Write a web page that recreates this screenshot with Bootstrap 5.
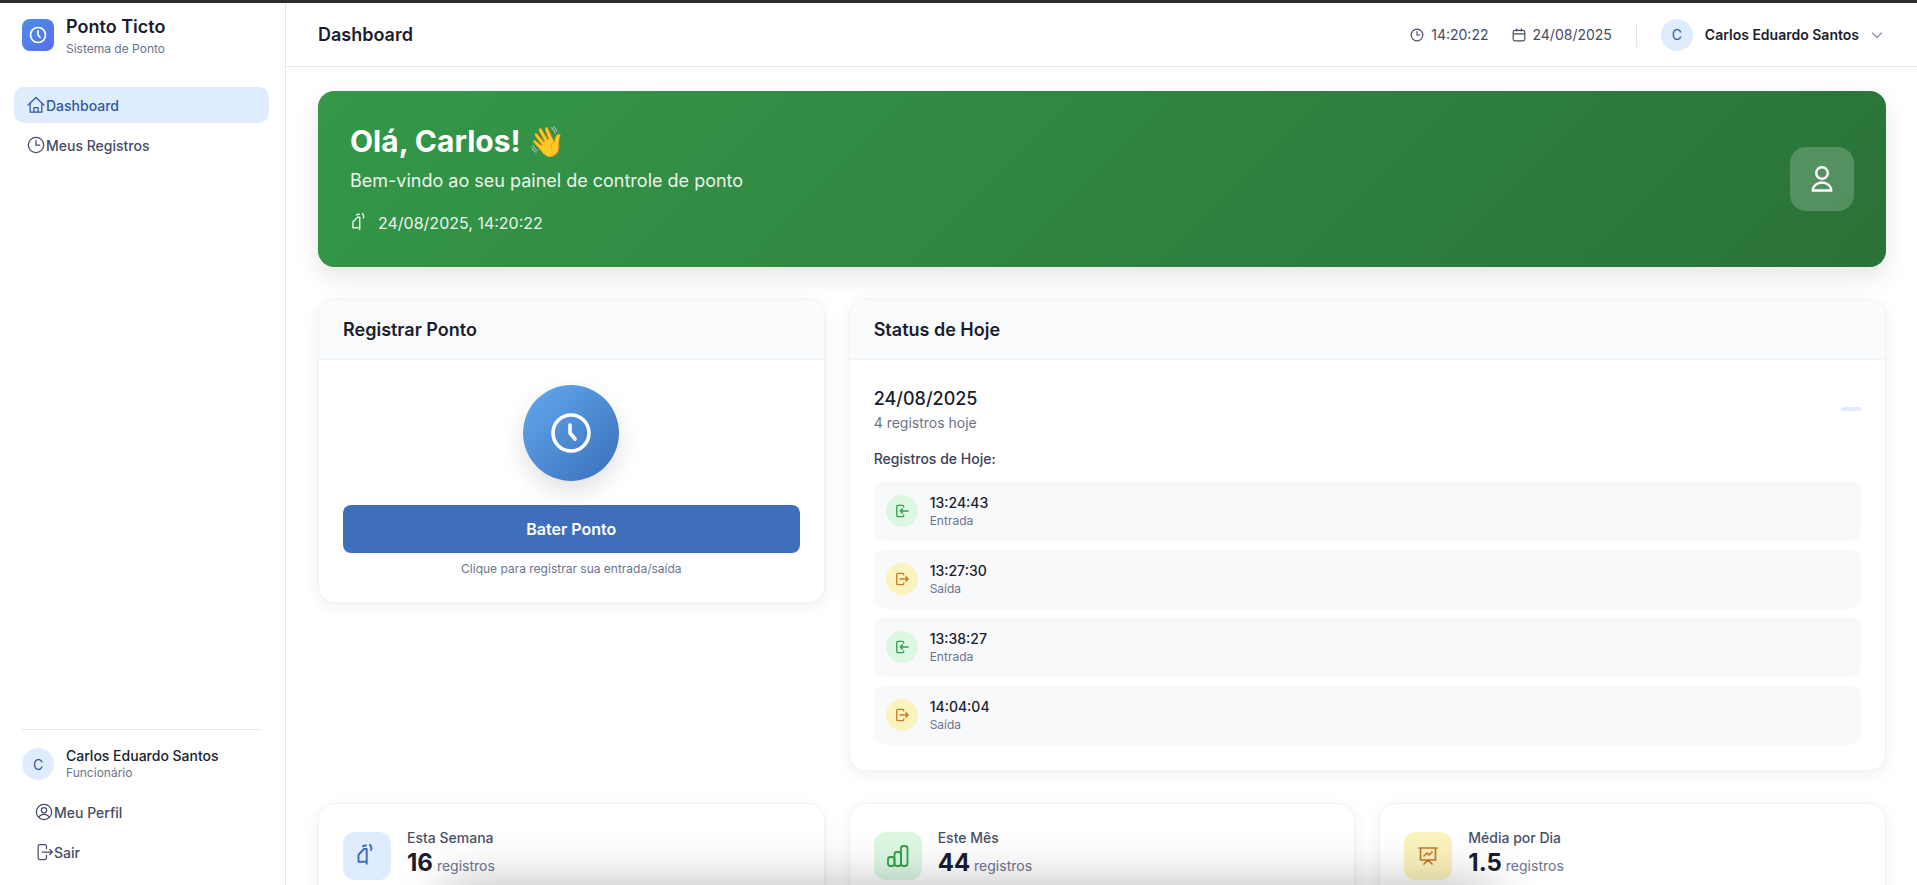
<!DOCTYPE html>
<html lang="pt-BR">
<head>
<meta charset="utf-8">
<title>Ponto Ticto</title>
<link href="https://cdn.jsdelivr.net/npm/bootstrap@5.3.0/dist/css/bootstrap.min.css" rel="stylesheet">
<style>
html,body{height:100%;}
body{font-family:"Inter","Noto Sans",sans-serif;color:#1a1d2e;background:#fff;overflow:hidden;}
.shell{height:100vh;border-top:3px solid #2f2f2f;position:relative;overflow:hidden;}
.side{width:286px;flex:none;border-right:1px solid #e2e6f0;background:#fff;padding:16px 22px 15px 14px;}
.brand{padding-left:8px;height:32px;margin-bottom:36px;gap:12px;}
.logo{width:32px;height:32px;border-radius:8px;background:linear-gradient(135deg,#4a90e2,#5a6cf0);color:#fff;}
.brand-name{font-size:18px;font-weight:600;line-height:22px;color:#1a1d2e;padding-top:2px;}
.brand-sub{font-size:12px;line-height:16px;color:#6b7390;margin-top:3px;}
.side-link{display:flex;align-items:center;height:36px;padding:0 12px;border-radius:10px;font-size:14px;font-weight:500;color:#464c63;text-decoration:none;width:255px;}
.side-link svg{flex:none;}
.side-link.on{background:#dfecfd;color:#2f5a9c;}
.side-foot{padding-left:8px;}
.foot-rule{border-top:1px solid #e2e6f0;margin-bottom:17px;width:239px;}
.foot-user{gap:12px;margin-bottom:13px;}
.avatar{width:32px;height:32px;border-radius:50%;background:#dfecfd;color:#2f5a9c;font-size:14px;flex:none;}
.user-name{font-size:14px;font-weight:500;line-height:18px;color:#1a1d2e;}
.user-role{font-size:12px;line-height:16px;color:#6b7390;}
.main{min-width:0;}
.topbar{height:64px;border-bottom:1px solid #e2e8f3;padding:0 34px 0 32px;background:#fff;flex:none;}
.page-title{font-size:18px;font-weight:600;margin:0;color:#1a1d2e;}
.top-meta{font-size:14px;color:#464c63;gap:7px;}
.top-meta+.top-meta{margin-left:24px;gap:6px;}
.v-rule{width:1px;height:24px;background:#e2e6f0;margin:0 24px;}
.top-person{gap:12px;}
.top-user{font-size:14px;font-weight:600;color:#1a1d2e;}
.content{padding:24px 31px 0 32px;}
.hero{height:176px;border-radius:16px;background:linear-gradient(135deg,#349848,#2a7238);color:#fff;padding:0 32px;box-shadow:0 10px 25px rgba(0,0,0,.1);margin-bottom:32px;}
.hero-title{font-size:30px;font-weight:700;line-height:36px;margin:0 0 8px;}
.hero-sub{font-size:18px;line-height:28px;opacity:.9;margin:0 0 16px;}
.hero-date{font-size:16px;line-height:24px;opacity:.9;gap:8px;}
.hero-box{width:64px;height:64px;border-radius:16px;background:rgba(255,255,255,.2);}
.panel{border:1px solid #f0f2f8;border-radius:16px;background:#fff;box-shadow:0 4px 16px rgba(0,0,0,.06);overflow:hidden;}
.panel-head{height:60px;padding:0 24px;background:#fafbfd;border-bottom:1px solid #f0f3f8;font-size:18px;font-weight:600;color:#1a1d2e;}
.panel-pad{padding:25px 24px;}
.punch{width:96px;height:96px;border-radius:50%;background:linear-gradient(135deg,#63a9ee,#3a6fba);color:#fff;box-shadow:0 10px 25px rgba(0,0,0,.12);margin:0 auto 24px;}
.punch-btn{height:48px;border:0;border-radius:8px;background:#3f6fbc;color:#fff;font-size:16px;font-weight:600;width:100%;}
.punch-note{font-size:12px;line-height:16px;color:#6b7390;margin-top:8px;text-align:center;}
.day{font-size:18px;font-weight:500;line-height:28px;color:#1a1d2e;}
.day-sub{font-size:14px;line-height:20px;color:#6b7390;}
.day-pill{width:20px;height:4px;border-radius:4px;background:#dfecfd;}
.reg-title{font-size:14px;font-weight:500;line-height:20px;color:#3a4057;margin:16px 0 12px;}
.reg-item{height:60px;border-radius:10px;background:#f8f9fb;padding:0 12px;margin-bottom:8px;gap:12px;}
.reg-item:last-child{margin-bottom:0;}
.reg-dot{width:32px;height:32px;border-radius:50%;flex:none;}
.t-in{background:#dcf8e3;color:#2fa24a;}
.t-out{background:#fbf3bd;color:#c9772a;}
.reg-time{font-size:14px;font-weight:500;line-height:20px;color:#1a1d2e;}
.reg-kind{font-size:12px;line-height:16px;color:#6b7390;}
.stat{padding:25px 24px;}
.stat-ico{width:48px;height:48px;border-radius:12px;flex:none;}
.t-blue{background:#dfecfd;color:#3f6fbc;}
.stat-label{font-size:14px;font-weight:500;line-height:18px;color:#4a5068;}
.stat-num{font-size:24px;font-weight:700;line-height:32px;color:#1a1d2e;}
.stat-unit{font-size:14px;font-weight:400;color:#6b7390;}
.win-shade{position:absolute;left:445px;right:425px;top:100%;height:60px;box-shadow:0 0 50px 0 rgba(0,0,0,.28);pointer-events:none;}
</style>
</head>
<body>
<svg width="0" height="0" class="position-absolute">
  <defs>
    <symbol id="ico-finger" viewBox="0 0 24 24"><path d="M9 5 3.500 10.700v7h8.200M11.700 5v14.700M9 5h2.700M8 2.300c1-1 2-1 3-.8M15 1c1.500 1.500 1.700 3.200 1 5"/></symbol>
    <symbol id="ico-in" viewBox="0 0 16 16"><path d="M10 3.500V3a1.500 1.500 0 0 0-1.500-1.500h-5A1.500 1.500 0 0 0 2 3v10a1.500 1.500 0 0 0 1.500 1.500h5A1.500 1.500 0 0 0 10 13v-.5M15 8H6m2.500-2.500L6 8l2.500 2.500"/></symbol>
    <symbol id="ico-out" viewBox="0 0 16 16"><path d="M10 3.500V3a1.500 1.500 0 0 0-1.500-1.500h-5A1.500 1.500 0 0 0 2 3v10a1.500 1.500 0 0 0 1.500 1.500h5A1.500 1.500 0 0 0 10 13v-.5M6 8h9m-2.500-2.500L15 8l-2.500 2.500"/></symbol>
  </defs>
</svg>
<div class="shell d-flex">
  <aside class="side d-flex flex-column">
    <div class="brand d-flex align-items-center">
      <div class="logo d-flex align-items-center justify-content-center">
        <svg width="20" height="20" viewBox="0 0 24 24" fill="none" stroke="currentColor" stroke-width="2" stroke-linecap="round"><circle cx="12" cy="12" r="9"/><path d="M12 7v5l2.500 3"/></svg>
      </div>
      <div>
        <div class="brand-name">Ponto Ticto</div>
        <div class="brand-sub">Sistema de Ponto</div>
      </div>
    </div>
    <nav class="d-flex flex-column gap-1">
      <a class="side-link on" href="#">
        <svg width="20" height="20" viewBox="0 0 24 24" fill="none" stroke="currentColor" stroke-width="1.500" stroke-linejoin="round" stroke-linecap="round"><path d="M2.500 12 12 3l9.500 9"/><path d="M5 10v10.500h14V10"/><path d="M9.500 20.500V15h5v5.500"/></svg>Dashboard</a>
      <a class="side-link" href="#">
        <svg width="20" height="20" viewBox="0 0 24 24" fill="none" stroke="currentColor" stroke-width="1.500" stroke-linecap="round"><circle cx="12" cy="12" r="9.200"/><path d="M12 6.500V12h4.500"/></svg>Meus Registros</a>
    </nav>
    <div class="side-foot mt-auto">
      <div class="foot-rule"></div>
      <div class="foot-user d-flex align-items-center">
        <div class="avatar d-flex align-items-center justify-content-center">C</div>
        <div>
          <div class="user-name">Carlos Eduardo Santos</div>
          <div class="user-role">Funcionário</div>
        </div>
      </div>
      <div class="d-flex flex-column gap-1">
        <a class="side-link" href="#">
          <svg width="20" height="20" viewBox="0 0 24 24" fill="none" stroke="currentColor" stroke-width="1.500"><circle cx="12" cy="12" r="9.200"/><circle cx="12" cy="10" r="3.200"/><path d="M5.800 18.600c1-2.600 3.400-3.800 6.200-3.800s5.200 1.200 6.200 3.800"/></svg>Meu Perfil</a>
        <a class="side-link" href="#">
          <svg width="20" height="20" viewBox="0 0 24 24" fill="none" stroke="currentColor" stroke-width="1.500" stroke-linecap="round" stroke-linejoin="round"><path d="M15 8V5a2 2 0 0 0-2-2H7a2 2 0 0 0-2 2v14a2 2 0 0 0 2 2h6a2 2 0 0 0 2-2v-3"/><path d="M10 12h12m-3-3 3 3-3 3"/></svg>Sair</a>
      </div>
    </div>
  </aside>
  <div class="main flex-grow-1 d-flex flex-column">
    <header class="topbar d-flex align-items-center">
      <h1 class="page-title">Dashboard</h1>
      <div class="ms-auto d-flex align-items-center">
        <div class="top-meta d-flex align-items-center">
          <svg width="14" height="14" viewBox="0 0 24 24" fill="none" stroke="currentColor" stroke-width="2" stroke-linecap="round"><circle cx="12" cy="12" r="10"/><path d="M12 6v6h5"/></svg>14:20:22
        </div>
        <div class="top-meta d-flex align-items-center">
          <svg width="14" height="14" viewBox="0 0 24 24" fill="none" stroke="currentColor" stroke-width="2"><rect x="2" y="4" width="20" height="18" rx="3"/><path d="M2 10h20M8 1v5M16 1v5"/></svg>24/08/2025
        </div>
        <div class="v-rule"></div>
        <div class="top-person d-flex align-items-center">
          <div class="avatar d-flex align-items-center justify-content-center">C</div>
          <span class="top-user">Carlos Eduardo Santos</span>
          <svg width="12" height="12" viewBox="0 0 12 12" fill="none" stroke="#8a90a6" stroke-width="1.200" stroke-linecap="round" stroke-linejoin="round"><path d="M1.500 4 6 8.500 10.500 4"/></svg>
        </div>
      </div>
    </header>
    <div class="content">
      <section class="hero d-flex align-items-center justify-content-between">
        <div>
          <h2 class="hero-title">Olá, Carlos! 👋</h2>
          <p class="hero-sub">Bem-vindo ao seu painel de controle de ponto</p>
          <div class="hero-date d-flex align-items-center">
            <svg width="20" height="20" fill="none" stroke="currentColor" stroke-width="1.700" stroke-linecap="round" stroke-linejoin="round"><use href="#ico-finger"/></svg>
            <span>24/08/2025, 14:20:22</span>
          </div>
        </div>
        <div class="hero-box d-flex align-items-center justify-content-center">
          <svg width="32" height="32" viewBox="0 0 32 32" fill="none" stroke="currentColor" stroke-width="2.400" stroke-linejoin="round"><circle cx="16" cy="10" r="5.800"/><path d="M6.700 27.500a9.300 8 0 0 1 18.600 0z"/></svg>
        </div>
      </section>
      <div class="row g-4">
        <div class="col-4 align-self-start">
          <div class="panel">
            <div class="panel-head d-flex align-items-center">Registrar Ponto</div>
            <div class="panel-pad">
              <div class="punch d-flex align-items-center justify-content-center">
                <svg width="40" height="40" viewBox="0 0 40 40" fill="none" stroke="currentColor" stroke-width="3.600" stroke-linecap="round"><circle cx="20" cy="20" r="18"/><path d="M19 12v8l5 6"/></svg>
              </div>
              <button class="punch-btn" type="button">Bater Ponto</button>
              <div class="punch-note">Clique para registrar sua entrada/saída</div>
            </div>
          </div>
        </div>
        <div class="col-8">
          <div class="panel">
            <div class="panel-head d-flex align-items-center">Status de Hoje</div>
            <div class="panel-pad">
              <div class="d-flex align-items-center justify-content-between">
                <div>
                  <div class="day">24/08/2025</div>
                  <div class="day-sub">4 registros hoje</div>
                </div>
                <div class="day-pill"></div>
              </div>
              <div class="reg-title">Registros de Hoje:</div>
              <div class="reg-item d-flex align-items-center">
                <div class="reg-dot t-in d-flex align-items-center justify-content-center"><svg width="14" height="14" fill="none" stroke="currentColor" stroke-width="1.500" stroke-linecap="round" stroke-linejoin="round"><use href="#ico-in"/></svg></div>
                <div><div class="reg-time">13:24:43</div><div class="reg-kind">Entrada</div></div>
              </div>
              <div class="reg-item d-flex align-items-center">
                <div class="reg-dot t-out d-flex align-items-center justify-content-center"><svg width="14" height="14" fill="none" stroke="currentColor" stroke-width="1.500" stroke-linecap="round" stroke-linejoin="round"><use href="#ico-out"/></svg></div>
                <div><div class="reg-time">13:27:30</div><div class="reg-kind">Saída</div></div>
              </div>
              <div class="reg-item d-flex align-items-center">
                <div class="reg-dot t-in d-flex align-items-center justify-content-center"><svg width="14" height="14" fill="none" stroke="currentColor" stroke-width="1.500" stroke-linecap="round" stroke-linejoin="round"><use href="#ico-in"/></svg></div>
                <div><div class="reg-time">13:38:27</div><div class="reg-kind">Entrada</div></div>
              </div>
              <div class="reg-item d-flex align-items-center">
                <div class="reg-dot t-out d-flex align-items-center justify-content-center"><svg width="14" height="14" fill="none" stroke="currentColor" stroke-width="1.500" stroke-linecap="round" stroke-linejoin="round"><use href="#ico-out"/></svg></div>
                <div><div class="reg-time">14:04:04</div><div class="reg-kind">Saída</div></div>
              </div>
            </div>
          </div>
        </div>
      </div>
      <div class="row g-4 mt-2">
        <div class="col-4">
          <div class="panel stat d-flex align-items-center gap-3">
            <div class="stat-ico t-blue d-flex align-items-center justify-content-center"><svg width="24" height="24" fill="none" stroke="currentColor" stroke-width="2" stroke-linecap="round" stroke-linejoin="round"><use href="#ico-finger"/></svg></div>
            <div><div class="stat-label">Esta Semana</div><div class="stat-num">16<span class="stat-unit"> registros</span></div></div>
          </div>
        </div>
        <div class="col-4">
          <div class="panel stat d-flex align-items-center gap-3">
            <div class="stat-ico t-in d-flex align-items-center justify-content-center"><svg width="24" height="24" viewBox="0 0 24 24" fill="none" stroke="currentColor" stroke-width="1.800" stroke-linejoin="round"><rect x="2" y="13" width="6.500" height="9" rx="2.500"/><rect x="8.500" y="8" width="6.500" height="14" rx="2.500"/><rect x="15" y="2" width="6.500" height="20" rx="2.500"/></svg></div>
            <div><div class="stat-label">Este Mês</div><div class="stat-num">44<span class="stat-unit"> registros</span></div></div>
          </div>
        </div>
        <div class="col-4">
          <div class="panel stat d-flex align-items-center gap-3">
            <div class="stat-ico t-out d-flex align-items-center justify-content-center"><svg width="24" height="24" viewBox="0 0 24 24" fill="none" stroke="currentColor" stroke-width="1.700" stroke-linecap="round" stroke-linejoin="round"><path d="M3 4h18M4.500 4v12h15V4M8 20l4-4 4 4"/><path d="m8 12 3-3 2 2 3-3"/></svg></div>
            <div><div class="stat-label">Média por Dia</div><div class="stat-num">1.5<span class="stat-unit"> registros</span></div></div>
          </div>
        </div>
      </div>
    </div>
  </div>
  <div class="win-shade"></div>
</div>
<script src="https://cdn.jsdelivr.net/npm/bootstrap@5.3.0/dist/js/bootstrap.bundle.min.js"></script>
</body>
</html>
